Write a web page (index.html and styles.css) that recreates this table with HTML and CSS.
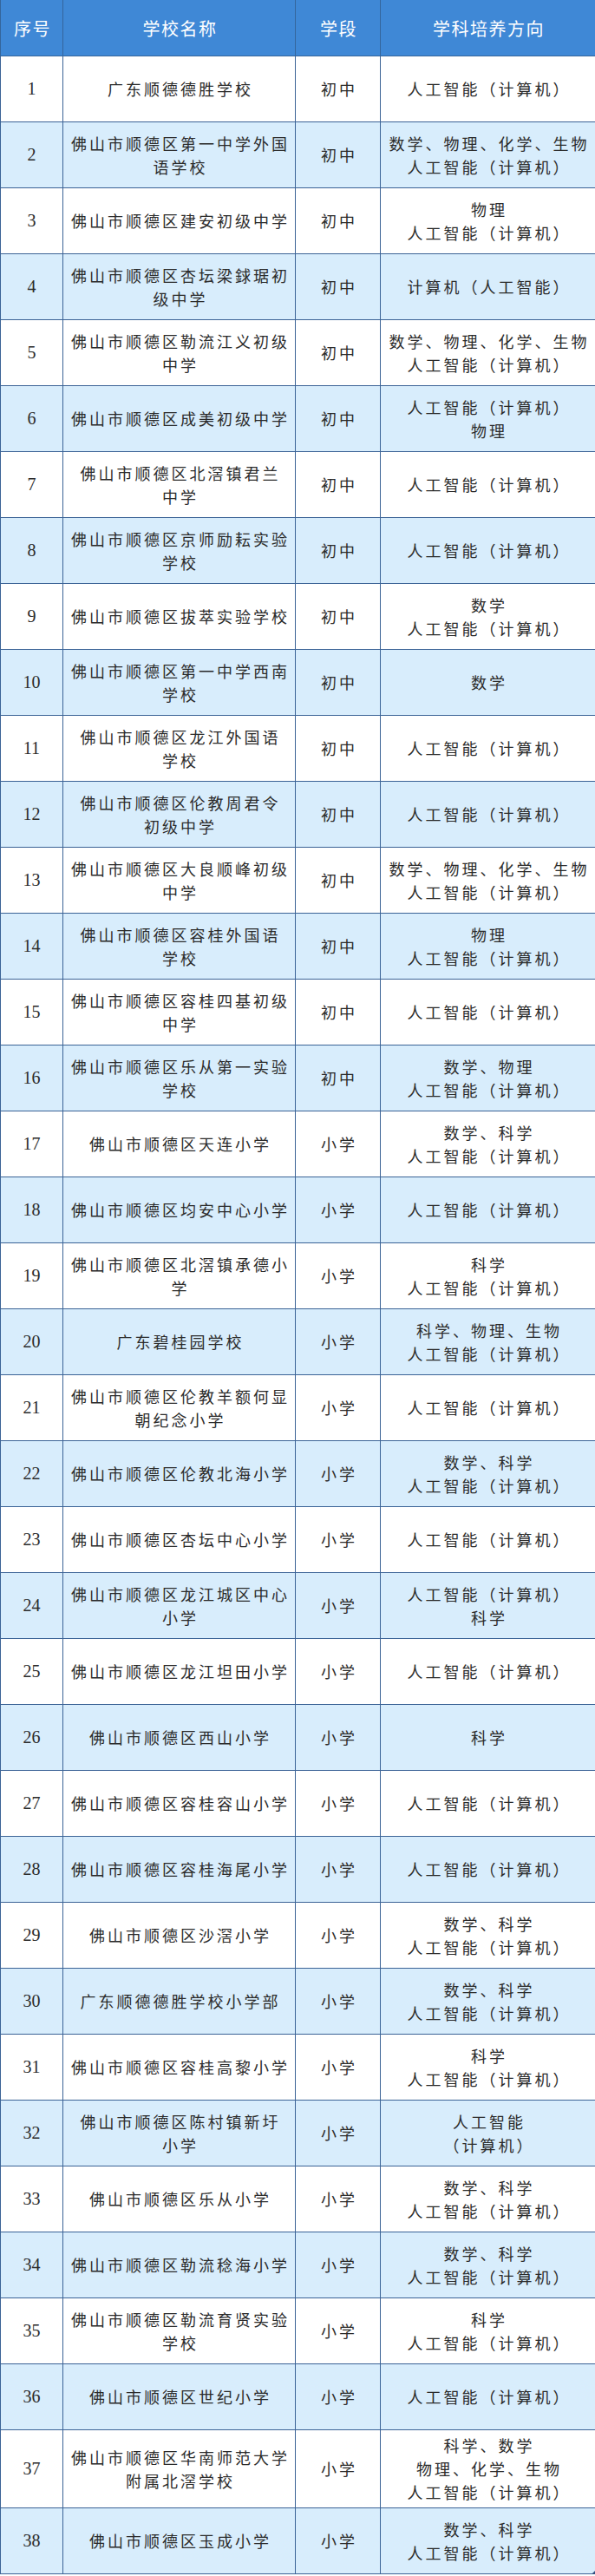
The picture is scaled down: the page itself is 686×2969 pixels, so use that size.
FILE: index.html
```html
<!DOCTYPE html>
<html lang="zh-CN">
<head>
<meta charset="utf-8">
<title>学科培养方向</title>
<link rel="stylesheet" href="styles.css">
</head>
<body>
<div class="sheet">
<table class="list">
<colgroup>
<col class="c-no"><col class="c-name"><col class="c-stage"><col class="c-dir">
</colgroup>
<thead>
<tr><th>序号</th><th>学校名称</th><th>学段</th><th>学科培养方向</th></tr>
</thead>
<tbody>
<tr><td class="no">1</td><td>广东顺德德胜学校</td><td>初中</td><td>人工智能（计算机）</td></tr>
<tr><td class="no">2</td><td>佛山市顺德区第一中学外国<br>语学校</td><td>初中</td><td>数学、物理、化学、生物<br>人工智能（计算机）</td></tr>
<tr><td class="no">3</td><td>佛山市顺德区建安初级中学</td><td>初中</td><td>物理<br>人工智能（计算机）</td></tr>
<tr><td class="no">4</td><td>佛山市顺德区杏坛梁銶琚初<br>级中学</td><td>初中</td><td>计算机（人工智能）</td></tr>
<tr><td class="no">5</td><td>佛山市顺德区勒流江义初级<br>中学</td><td>初中</td><td>数学、物理、化学、生物<br>人工智能（计算机）</td></tr>
<tr><td class="no">6</td><td>佛山市顺德区成美初级中学</td><td>初中</td><td>人工智能（计算机）<br>物理</td></tr>
<tr><td class="no">7</td><td>佛山市顺德区北滘镇君兰<br>中学</td><td>初中</td><td>人工智能（计算机）</td></tr>
<tr><td class="no">8</td><td>佛山市顺德区京师励耘实验<br>学校</td><td>初中</td><td>人工智能（计算机）</td></tr>
<tr><td class="no">9</td><td>佛山市顺德区拔萃实验学校</td><td>初中</td><td>数学<br>人工智能（计算机）</td></tr>
<tr><td class="no">10</td><td>佛山市顺德区第一中学西南<br>学校</td><td>初中</td><td>数学</td></tr>
<tr><td class="no">11</td><td>佛山市顺德区龙江外国语<br>学校</td><td>初中</td><td>人工智能（计算机）</td></tr>
<tr><td class="no">12</td><td>佛山市顺德区伦教周君令<br>初级中学</td><td>初中</td><td>人工智能（计算机）</td></tr>
<tr><td class="no">13</td><td>佛山市顺德区大良顺峰初级<br>中学</td><td>初中</td><td>数学、物理、化学、生物<br>人工智能（计算机）</td></tr>
<tr><td class="no">14</td><td>佛山市顺德区容桂外国语<br>学校</td><td>初中</td><td>物理<br>人工智能（计算机）</td></tr>
<tr><td class="no">15</td><td>佛山市顺德区容桂四基初级<br>中学</td><td>初中</td><td>人工智能（计算机）</td></tr>
<tr><td class="no">16</td><td>佛山市顺德区乐从第一实验<br>学校</td><td>初中</td><td>数学、物理<br>人工智能（计算机）</td></tr>
<tr><td class="no">17</td><td>佛山市顺德区天连小学</td><td>小学</td><td>数学、科学<br>人工智能（计算机）</td></tr>
<tr><td class="no">18</td><td>佛山市顺德区均安中心小学</td><td>小学</td><td>人工智能（计算机）</td></tr>
<tr><td class="no">19</td><td>佛山市顺德区北滘镇承德小<br>学</td><td>小学</td><td>科学<br>人工智能（计算机）</td></tr>
<tr><td class="no">20</td><td>广东碧桂园学校</td><td>小学</td><td>科学、物理、生物<br>人工智能（计算机）</td></tr>
<tr><td class="no">21</td><td>佛山市顺德区伦教羊额何显<br>朝纪念小学</td><td>小学</td><td>人工智能（计算机）</td></tr>
<tr><td class="no">22</td><td>佛山市顺德区伦教北海小学</td><td>小学</td><td>数学、科学<br>人工智能（计算机）</td></tr>
<tr><td class="no">23</td><td>佛山市顺德区杏坛中心小学</td><td>小学</td><td>人工智能（计算机）</td></tr>
<tr><td class="no">24</td><td>佛山市顺德区龙江城区中心<br>小学</td><td>小学</td><td>人工智能（计算机）<br>科学</td></tr>
<tr><td class="no">25</td><td>佛山市顺德区龙江坦田小学</td><td>小学</td><td>人工智能（计算机）</td></tr>
<tr><td class="no">26</td><td>佛山市顺德区西山小学</td><td>小学</td><td>科学</td></tr>
<tr><td class="no">27</td><td>佛山市顺德区容桂容山小学</td><td>小学</td><td>人工智能（计算机）</td></tr>
<tr><td class="no">28</td><td>佛山市顺德区容桂海尾小学</td><td>小学</td><td>人工智能（计算机）</td></tr>
<tr><td class="no">29</td><td>佛山市顺德区沙滘小学</td><td>小学</td><td>数学、科学<br>人工智能（计算机）</td></tr>
<tr><td class="no">30</td><td>广东顺德德胜学校小学部</td><td>小学</td><td>数学、科学<br>人工智能（计算机）</td></tr>
<tr><td class="no">31</td><td>佛山市顺德区容桂高黎小学</td><td>小学</td><td>科学<br>人工智能（计算机）</td></tr>
<tr><td class="no">32</td><td>佛山市顺德区陈村镇新圩<br>小学</td><td>小学</td><td>人工智能<br>（计算机）</td></tr>
<tr><td class="no">33</td><td>佛山市顺德区乐从小学</td><td>小学</td><td>数学、科学<br>人工智能（计算机）</td></tr>
<tr><td class="no">34</td><td>佛山市顺德区勒流稔海小学</td><td>小学</td><td>数学、科学<br>人工智能（计算机）</td></tr>
<tr><td class="no">35</td><td>佛山市顺德区勒流育贤实验<br>学校</td><td>小学</td><td>科学<br>人工智能（计算机）</td></tr>
<tr><td class="no">36</td><td>佛山市顺德区世纪小学</td><td>小学</td><td>人工智能（计算机）</td></tr>
<tr class="tall"><td class="no">37</td><td>佛山市顺德区华南师范大学<br>附属北滘学校</td><td>小学</td><td>科学、数学<br>物理、化学、生物<br>人工智能（计算机）</td></tr>
<tr><td class="no">38</td><td>佛山市顺德区玉成小学</td><td>小学</td><td>数学、科学<br>人工智能（计算机）</td></tr>
</tbody>
</table>
</div>
</body>
</html>
```
FILE: styles.css
```css
html, body {
  margin: 0;
  padding: 0;
  background: #ffffff;
}

.sheet {
  position: relative;
  width: 686px;
}

.sheet::after {
  content: "";
  position: absolute;
  right: 0;
  bottom: 0;
  width: 0;
  height: 0;
  border-left: 4px solid transparent;
  border-bottom: 4px solid #2f4f7f;
}

.list {
  width: 686px;
  table-layout: fixed;
  border-collapse: collapse;
  font-family: "Noto Sans CJK SC", "Noto Sans", sans-serif;
}

.c-no { width: 72px; }
.c-name { width: 268px; }
.c-stage { width: 98px; }
.c-dir { width: 248px; }

.list th {
  height: 64px;
  padding: 0 0 0 2px;
  background: #3f88d6;
  color: #ffffff;
  font-size: 20px;
  font-weight: 400;
  letter-spacing: 1.5px;
  text-align: center;
  vertical-align: middle;
  border: 1px solid #34659c;
  border-top: none;
}

.list td {
  height: 75px;
  padding: 0 0 0 3px;
  color: #2b2b2b;
  font-size: 18px;
  line-height: 27px;
  letter-spacing: 3px;
  text-align: center;
  vertical-align: middle;
  border: 1px solid #3b6396;
  white-space: nowrap;
}

.list tbody tr:nth-child(even) td {
  background: #d8edfc;
}

.list tr.tall td {
  height: 89px;
}

.list td.no {
  padding: 0;
  font-family: "Liberation Serif", "DejaVu Serif", serif;
  font-size: 20px;
  letter-spacing: 0;
}
```
